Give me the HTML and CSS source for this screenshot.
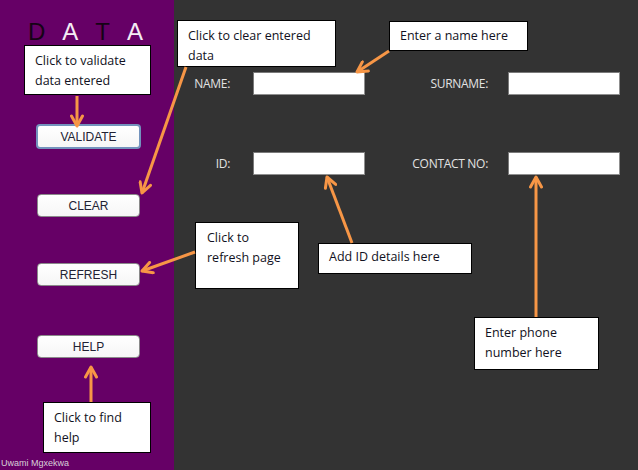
FILE: index.html
```html
<!DOCTYPE html>
<html>
<head>
<meta charset="utf-8">
<link rel="stylesheet" href="styles.css">
</head>
<body>
<div class="page">
  <aside class="sidebar">
    <h1 class="title"><span class="dark">D</span><span class="light">A</span><span class="dark">T</span><span class="light">A</span></h1>
    <div class="buttons">
      <button class="btn btn-focus">VALIDATE</button>
      <button class="btn">CLEAR</button>
      <button class="btn">REFRESH</button>
      <button class="btn btn-help">HELP</button>
    </div>
    <div class="author">Uwami Mgxekwa</div>
  </aside>
  <main class="main">
    <form class="form">
      <label class="label label-left">NAME:</label><input class="field" type="text">
      <label class="label label-right">SURNAME:</label><input class="field" type="text">
      <label class="label label-left">ID:</label><input class="field" type="text">
      <label class="label label-right">CONTACT NO:</label><input class="field" type="text">
    </form>
  </main>

  <div class="note note-validate">Click to validate<br>data entered</div>
  <div class="note note-clear">Click to clear entered<br>data</div>
  <div class="note note-name">Enter a name here</div>
  <div class="note note-refresh">Click to<br>refresh page</div>
  <div class="note note-id">Add ID details here</div>
  <div class="note note-phone">Enter phone<br>number here</div>
  <div class="note note-help">Click to find<br>help</div>

  <svg class="arrows" width="638" height="470" viewBox="0 0 638 470">
    <defs>
      <marker id="head" viewBox="0 0 14 14" refX="12" refY="7" markerWidth="14" markerHeight="14" markerUnits="userSpaceOnUse" orient="auto">
        <path d="M2,1.5 L12,7 L2,12.5" fill="none" stroke="#f79646" stroke-width="3" stroke-linecap="round" stroke-linejoin="round"/>
      </marker>
    </defs>
    <g stroke="#f79646" stroke-width="3" fill="none" marker-end="url(#head)">
      <line x1="77" y1="96" x2="77" y2="126"/>
      <line x1="186" y1="67" x2="142" y2="193"/>
      <line x1="389" y1="51" x2="357" y2="72"/>
      <line x1="195" y1="252" x2="142" y2="271"/>
      <line x1="352" y1="243" x2="327" y2="177"/>
      <line x1="536" y1="317" x2="536" y2="177"/>
      <line x1="91" y1="402" x2="91" y2="367"/>
    </g>
  </svg>
</div>
</body>
</html>
```

FILE: styles.css
```css
* { box-sizing: border-box; }
html, body { margin: 0; padding: 0; }
body {
  width: 638px;
  height: 470px;
  overflow: hidden;
  background: #333333;
  font-family: "Open Sans", "Noto Sans", sans-serif;
}
.page {
  position: relative;
  display: flex;
  width: 638px;
  height: 470px;
}
.sidebar {
  width: 174px;
  flex: none;
  background: #660066;
  display: flex;
  flex-direction: column;
  padding-top: 20px;
}
.title {
  margin: 0;
  padding-left: 28px;
  display: flex;
  gap: 17px;
  font-family: "Liberation Sans", Arial, sans-serif;
  font-weight: normal;
  font-size: 24px;
  line-height: 24px;
  height: 24px;
}
.dark { color: #150315; }
.light { color: #f4ecf4; }
.buttons {
  display: flex;
  flex-direction: column;
  gap: 46px;
  margin-top: 80px;
  padding-left: 37px;
}
.btn {
  width: 103px;
  height: 23px;
  margin: 0;
  padding: 0;
  background: linear-gradient(#ffffff, #f6f6f6);
  border: 1px solid #8a8a8a;
  border-radius: 4px;
  font-family: "Liberation Sans", Arial, sans-serif;
  font-size: 12px;
  color: #222233;
  text-align: center;
}
.btn-focus {
  height: 25px;
  margin-left: -1px;
  margin-bottom: -1px;
  width: 105px;
  border: 2px solid #7393bd;
}
.btn-help { margin-top: 3px; }
.author {
  margin-top: auto;
  padding: 0 0 1px 1px;
  font-family: "Liberation Sans", Arial, sans-serif;
  font-size: 9px;
  line-height: 11px;
  color: #d8cfd8;
}
.main {
  flex: 1;
  padding-top: 72px;
}
.form {
  display: grid;
  grid-template-columns: 79px 112px 143px 112px;
  grid-auto-rows: 23px;
  row-gap: 57px;
  align-items: center;
}
.label {
  text-align: right;
  font-family: "Open Sans", "Noto Sans", sans-serif;
  font-size: 12px;
  color: #e2e2e2;
  letter-spacing: -0.3px;
}
.label-left { padding-right: 23px; }
.label-right { padding-right: 20px; }
.field {
  width: 112px;
  height: 23px;
  margin: 0;
  background: #ffffff;
  border: 1px solid #8f8f8f;
  border-top-color: #7a7a7a;
  border-left-color: #7a7a7a;
}
.note {
  position: absolute;
  background: #ffffff;
  border: 1px solid #000000;
  padding: 5px 0 0 10px;
  font-family: "Open Sans", "Noto Sans", sans-serif;
  font-size: 12.5px;
  line-height: 20px;
  color: #111122;
  white-space: nowrap;
}
.note-validate { left: 24px; top: 45px; width: 127px; height: 50px; }
.note-clear { left: 177px; top: 20px; width: 159px; height: 47px; padding-top: 5px; }
.note-name { left: 389px; top: 21px; width: 139px; height: 30px; padding-top: 4px; }
.note-refresh { left: 195px; top: 222px; width: 104px; height: 67px; padding-left: 11px; }
.note-id { left: 318px; top: 243px; width: 154px; height: 31px; padding-top: 3px; }
.note-phone { left: 474px; top: 317px; width: 125px; height: 53px; }
.note-help { left: 43px; top: 402px; width: 108px; height: 51px; }
.arrows {
  position: absolute;
  left: 0;
  top: 0;
  pointer-events: none;
}
```
